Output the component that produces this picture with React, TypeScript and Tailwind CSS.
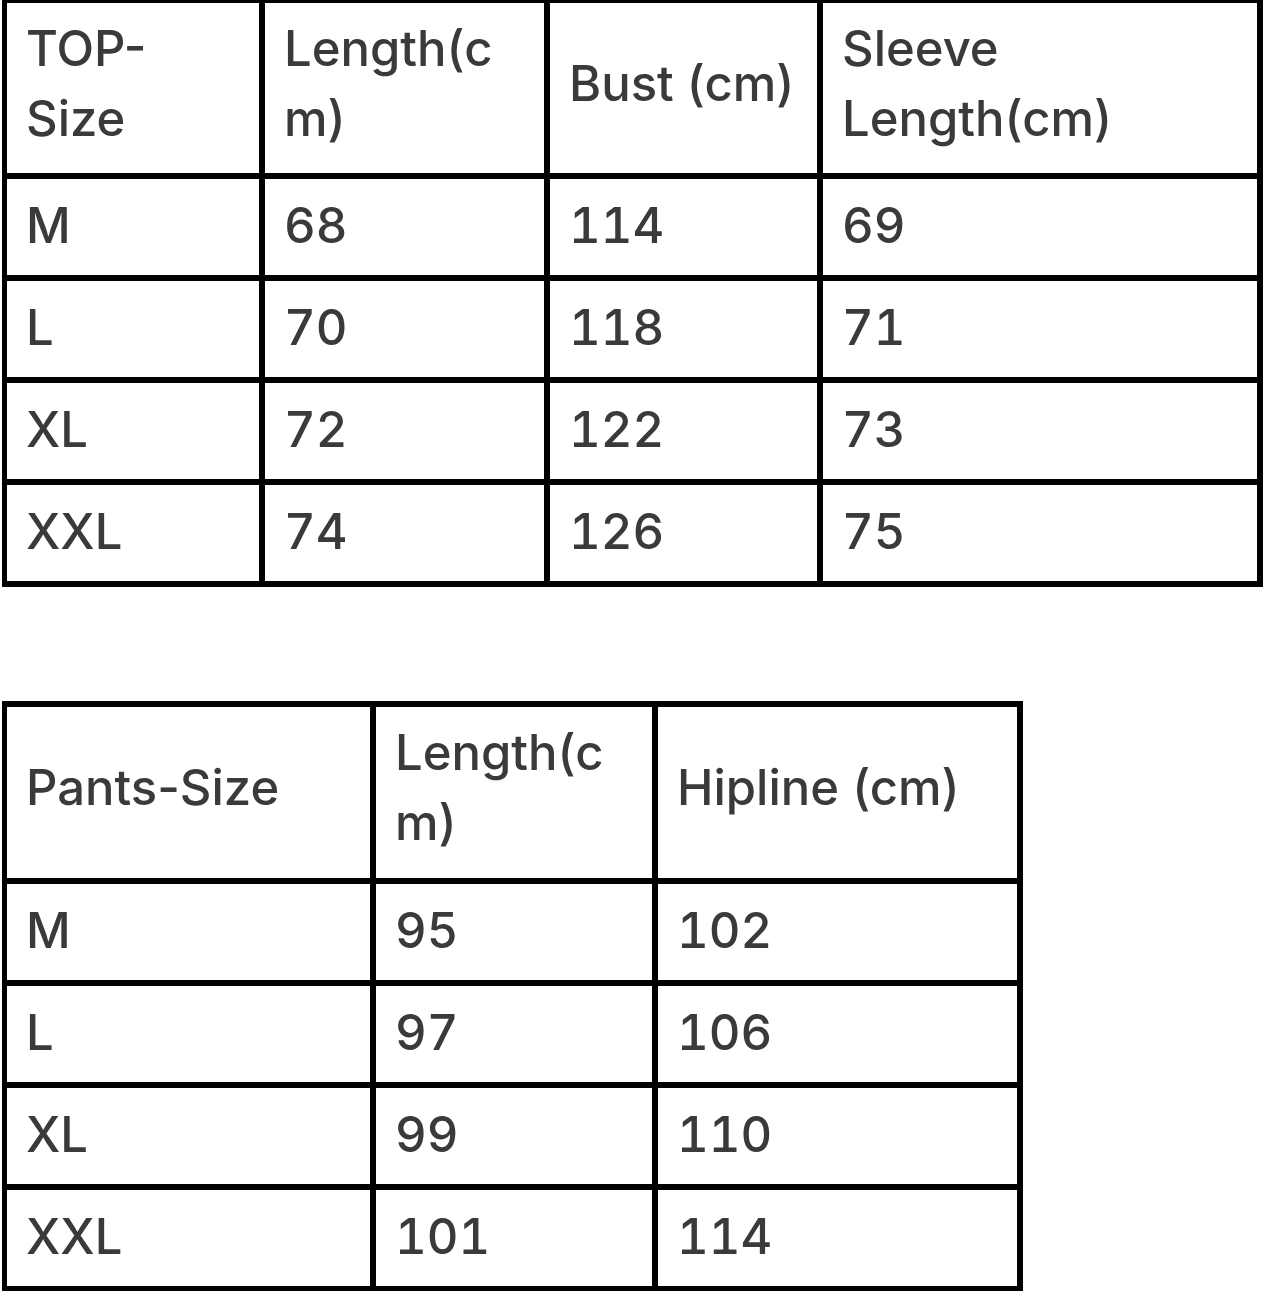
import React from "react";

const font = "font-['Inter','Liberation_Sans',Arial,sans-serif] font-medium text-[49px] text-[#3a3a3a]";

function Table({
  widths,
  header,
  rows,
  tableCls,
  headerCls,
}: {
  widths: string[];
  header: React.ReactNode[];
  rows: string[][];
  tableCls: string;
  headerCls: string;
}) {
  return (
    <div className={`border-l-[5px] border-black ${tableCls} ${font}`}>
      <div className={`flex ${headerCls}`}>
        {header.map((h, i) => (
          <div
            key={i}
            className={`flex items-center border-r-[6px] border-b-[6px] border-black pl-[19px] pb-[9px] leading-[70px] ${widths[i]}`}
          >
            <div>{h}</div>
          </div>
        ))}
      </div>
      {rows.map((r, ri) => (
        <div key={ri} className="flex h-[102px] tabular-nums">
          {r.map((c, ci) => (
            <div
              key={ci}
              className={`flex items-center border-r-[6px] border-b-[6px] border-black pl-[19px] pb-[3px] leading-[60px] ${widths[ci]}`}
            >
              {c}
            </div>
          ))}
        </div>
      ))}
    </div>
  );
}

export default function App() {
  return (
    <div className="w-[1267px] h-[1291px] overflow-hidden bg-white pl-[2px]">
      <Table
        widths={["w-[258px]", "w-[285px]", "w-[273px]", "w-[440px]"]}
        tableCls="w-[1261px] border-t-[3px]"
        headerCls="h-[176px]"
        header={[
          <>TOP-<br />Size</>,
          <>Length(c<br />m)</>,
          <>Bust (cm)</>,
          <>Sleeve<br />Length(cm)</>,
        ]}
        rows={[
          ["M", "68", "114", "69"],
          ["L", "70", "118", "71"],
          ["XL", "72", "122", "73"],
          ["XXL", "74", "126", "75"],
        ]}
      />
      <div className="mt-[114px]">
        <Table
          widths={["w-[369px]", "w-[282px]", "w-[365px]"]}
          tableCls="w-[1021px] border-t-[6px]"
          headerCls="h-[177px]"
          header={[
            <>Pants-Size</>,
            <>Length(c<br />m)</>,
            <>Hipline (cm)</>,
          ]}
          rows={[
            ["M", "95", "102"],
            ["L", "97", "106"],
            ["XL", "99", "110"],
            ["XXL", "101", "114"],
          ]}
        />
      </div>
    </div>
  );
}
